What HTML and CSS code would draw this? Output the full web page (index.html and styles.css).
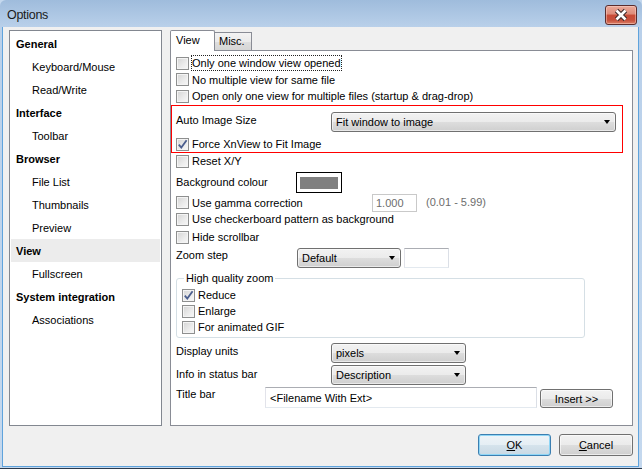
FILE: index.html
```html
<!DOCTYPE html>
<html>
<head>
<meta charset="utf-8">
<title>Options</title>
<link rel="stylesheet" href="styles.css">
</head>
<body>
<div class="window">
  <div class="titlebar">
    <span class="title">Options</span>
    <div class="close">
      <svg width="30" height="18" viewBox="0 0 30 18">
        <path d="M10.5 4.5 L19.5 13.5 M19.5 4.5 L10.5 13.5" stroke="#3d2a2a" stroke-width="4.6" fill="none"/>
        <path d="M10.5 4.5 L19.5 13.5 M19.5 4.5 L10.5 13.5" stroke="#ffffff" stroke-width="2.6" fill="none"/>
      </svg>
    </div>
  </div>
  <div class="client">
    <div class="main">
      <div class="nav">
        <div class="nav-item group">General</div>
        <div class="nav-item sub">Keyboard/Mouse</div>
        <div class="nav-item sub">Read/Write</div>
        <div class="nav-item group">Interface</div>
        <div class="nav-item sub">Toolbar</div>
        <div class="nav-item group">Browser</div>
        <div class="nav-item sub">File List</div>
        <div class="nav-item sub">Thumbnails</div>
        <div class="nav-item sub">Preview</div>
        <div class="nav-item group selected">View</div>
        <div class="nav-item sub">Fullscreen</div>
        <div class="nav-item group">System integration</div>
        <div class="nav-item sub">Associations</div>
      </div>
      <div class="tabs">
        <div class="tabstrip">
          <div class="tab active">View</div>
          <div class="tab">Misc.</div>
        </div>
        <div class="panel">
          <div class="row r1"><span class="cb"></span><span class="focus">Only one window view opened</span></div>
          <div class="row r2"><span class="cb"></span><span>No multiple view for same file</span></div>
          <div class="row r3"><span class="cb"></span><span>Open only one view for multiple files (startup &amp; drag-drop)</span></div>
          <div class="redbox">
            <div class="row-in sel-row">
              <span class="label w155">Auto Image Size</span>
              <div class="select wide"><span>Fit window to image</span><span class="arrow"></span></div>
            </div>
            <div class="row-in force-row">
              <span class="cb checked"><svg width="11" height="11" viewBox="0 0 11 11"><path d="M1.8 5.6 L4.3 8.6 L9.6 1.2" fill="none" stroke="#4b5e8e" stroke-width="1.8"/></svg></span><span>Force XnView to Fit Image</span>
            </div>
          </div>
          <div class="row h16"><span class="cb"></span><span>Reset X/Y</span></div>
          <div class="row bg-row">
            <span class="label w120">Background colour</span>
            <div class="swatch"><div class="swatch-fill"></div></div>
          </div>
          <div class="row gamma-row">
            <div class="cbgroup"><span class="cb"></span><span>Use gamma correction</span></div>
            <div class="textbox disabled small">1.000</div>
            <span class="range">(0.01 - 5.99)</span>
          </div>
          <div class="row h16"><span class="cb"></span><span>Use checkerboard pattern as background</span></div>
          <div class="row hide-row"><span class="cb"></span><span>Hide scrollbar</span></div>
          <div class="row zoom-row">
            <span class="label w121 top">Zoom step</span>
            <div class="select zoomsel"><span>Default</span><span class="arrow"></span></div>
            <div class="textbox small zoombox"></div>
          </div>
          <fieldset class="group-box">
            <legend>High quality zoom</legend>
            <div class="grow"><span class="cb checked"><svg width="11" height="11" viewBox="0 0 11 11"><path d="M1.8 5.6 L4.3 8.6 L9.6 1.2" fill="none" stroke="#4b5e8e" stroke-width="1.8"/></svg></span><span>Reduce</span></div>
            <div class="grow"><span class="cb"></span><span>Enlarge</span></div>
            <div class="grow"><span class="cb"></span><span>For animated GIF</span></div>
          </fieldset>
          <div class="row units-row">
            <span class="label w155 top">Display units</span>
            <div class="select mid"><span>pixels</span><span class="arrow"></span></div>
          </div>
          <div class="row info-row">
            <span class="label w155 top">Info in status bar</span>
            <div class="select mid"><span>Description</span><span class="arrow"></span></div>
          </div>
          <div class="row title-row">
            <span class="label w89 top">Title bar</span>
            <div class="textbox titlebox">&lt;Filename With Ext&gt;</div>
            <button class="btn insert">Insert &gt;&gt;</button>
          </div>
        </div>
      </div>
    </div>
    <div class="footer">
      <button class="btn ok default"><u>O</u>K</button>
      <button class="btn cancel"><u>C</u>ancel</button>
    </div>
  </div>
</div>
</body>
</html>
```

FILE: styles.css
```css
* { box-sizing: border-box; }
html, body { margin: 0; padding: 0; }
body {
  width: 642px;
  height: 469px;
  overflow: hidden;
  font-family: "Liberation Sans", Arial, sans-serif;
  font-size: 11px;
  color: #000;
  background: #c4d8ee;
}
.window {
  width: 642px;
  height: 469px;
  display: flex;
  flex-direction: column;
  background: linear-gradient(#9fbcdc, #b9d0ea 27px, #c4d8ee);
  border-bottom: 1px solid #2b3a4c;
  border-radius: 6px 6px 0 0;
}
.titlebar {
  height: 27px;
  flex: none;
  display: flex;
  align-items: flex-start;
  padding-left: 7px;
}
.title {
  margin-top: 8px;
  line-height: 14px;
  font-size: 12.5px;
  letter-spacing: -0.3px;
  color: #1a1a1a;
}
.close {
  margin-left: auto;
  margin-right: 5px;
  margin-top: 5px;
  width: 32px;
  height: 20px;
  border: 1px solid #5b2d2d;
  border-radius: 3px;
  background: linear-gradient(#eaa999 0%, #de8c7a 45%, #c94b36 50%, #c6503c 78%, #dc8066 100%);
  box-shadow: inset 0 0 0 1px rgba(255, 220, 210, 0.45);
  display: flex;
  align-items: center;
  justify-content: center;
}
.close svg { display: block; }
.client {
  flex: 1;
  margin: 0 3px 1px 2px;
  border: 1px solid #5fa3dc;
  border-top: 0;
  background: #f0f0f0;
  padding: 3px 5px 0 6px;
  display: flex;
  flex-direction: column;
}
.main {
  display: flex;
  gap: 8px;
  height: 396px;
}
.nav {
  width: 153px;
  height: 396px;
  border: 1px solid #828790;
  background: #fff;
  padding: 1px 1px 1px;
}
.nav-item {
  height: 23px;
  display: flex;
  align-items: center;
  white-space: nowrap;
}
.nav-item.group { padding-left: 5px; font-weight: bold; }
.nav-item.sub { padding-left: 21px; }
.nav-item.selected { background: #ececec; }

.tabs {
  width: 463px;
  height: 396px;
  display: flex;
  flex-direction: column;
}
.tabstrip {
  height: 20px;
  flex: none;
  display: flex;
  align-items: flex-end;
}
.tab {
  height: 18px;
  width: 38px;
  margin-left: -1px;
  border: 1px solid #898c95;
  border-bottom: 0;
  padding-left: 4px;
  line-height: 17px;
  background: linear-gradient(#f3f3f3 0%, #ebebeb 50%, #dedede 51%, #d6d6d6 100%);
}
.tab.active {
  position: relative;
  z-index: 1;
  margin-left: 0;
  width: 45px;
  height: 21px;
  margin-bottom: -1px;
  padding-left: 5px;
  line-height: 19px;
  background: #fff;
  border-radius: 2px 2px 0 0;
}
.tab.active + .tab { margin-left: -1px; }

.panel {
  flex: 1;
  border: 1px solid #898c95;
  background: #fff;
  display: flex;
  flex-direction: column;
}
.row {
  display: flex;
  align-items: center;
  margin-left: 5px;
  height: 16px;
  white-space: nowrap;
}
.row-in {
  display: flex;
  align-items: center;
  white-space: nowrap;
}
.r1 { margin-top: 4px; height: 16px; }
.r2 { height: 17px; }
.r3 { height: 16px; }
.h16 { height: 16px; }

.cb {
  width: 13px;
  height: 13px;
  flex: none;
  margin-right: 3px;
  border: 1px solid #8e8f8f;
  background: linear-gradient(135deg, #d4d4d4 0%, #ececec 60%, #f8f8f8 100%);
  box-shadow: inset 0 0 0 1px #f4f4f4;
  display: flex;
  align-items: center;
  justify-content: center;
}
.cb svg { display: block; overflow: visible; }
.focus {
  outline: 1px dotted #222;
  line-height: 14px;
}

.redbox {
  margin-top: 1px;
  width: 452px;
  border: 1px solid #ff0000;
  padding: 6px 0 0 4px;
}
.sel-row { height: 20px; align-items: flex-start; }
.sel-row .label { line-height: 14px; padding-top: 1px; }
.force-row { height: 16px; margin-top: 4px; }

.label { flex: none; }
.label.top { align-self: flex-start; line-height: 14px; }
.w155 { width: 155px; }
.w120 { width: 120px; }
.w121 { width: 121px; }
.w89 { width: 89px; }

.select {
  height: 20px;
  border: 1px solid #707070;
  border-radius: 3px;
  background: linear-gradient(#f2f2f2 0%, #ebebeb 50%, #dddddd 51%, #cfcfcf 100%);
  box-shadow: inset 0 0 0 1px rgba(255, 255, 255, 0.55);
  display: flex;
  align-items: center;
  padding-left: 4px;
  flex: none;
}
.select .arrow {
  margin-left: auto;
  margin-right: 5px;
  width: 0;
  height: 0;
  border-left: 3.5px solid transparent;
  border-right: 3.5px solid transparent;
  border-top: 4px solid #000;
}
.select.wide { width: 285px; }
.select.mid { width: 135px; }
.select.zoomsel { width: 104px; }

.bg-row { margin-top: 3px; height: 20px; }
.swatch {
  width: 46px;
  height: 21px;
  border: 1px solid #000;
  background: #fff;
  padding: 4px 3px 3px;
}
.swatch-fill { width: 100%; height: 100%; background: #808080; }

.gamma-row { margin-top: 2px; height: 17px; align-items: flex-start; }
.cbgroup { width: 196px; display: flex; align-items: center; height: 17px; }
.textbox {
  height: 20px;
  border: 1px solid;
  border-color: #abadb3 #dbdfe6 #e3e9ef #e2e3ea;
  background: #fff;
  display: flex;
  align-items: center;
  padding-left: 4px;
  flex: none;
}
.textbox.small { width: 45px; }
.textbox.disabled {
  height: 18px;
  border-color: #c9c9c9;
  color: #6d6d6d;
  padding-left: 3px;
}
.range { margin-left: 9px; color: #6d6d6d; line-height: 17px; }

.hide-row { margin-top: 1px; height: 18px; }
.zoom-row { margin-top: 2px; height: 20px; align-items: flex-start; }
.zoom-row .label { padding-top: 0; }
.zoombox { margin-left: 3px; }

.group-box {
  margin: 4px 0 0 5px;
  width: 409px;
  border: 1px solid #d5dfe5;
  border-radius: 3px;
  padding: 2px 0 2px 5px;
  min-width: 0;
}
.group-box legend {
  padding: 0 2px;
  margin-left: 2px;
  line-height: 13px;
}
.grow {
  height: 16px;
  display: flex;
  align-items: center;
  white-space: nowrap;
}

.units-row { margin-top: 5px; height: 20px; align-items: flex-start; }
.units-row .label { padding-top: 1px; }
.info-row { margin-top: 2px; height: 20px; align-items: flex-start; }
.info-row .label { padding-top: 2px; }
.title-row { margin-top: 2px; height: 21px; align-items: flex-start; }
.titlebox { width: 272px; height: 21px; }

.btn {
  font-family: inherit;
  font-size: 11px;
  color: #000;
  padding: 0;
  border: 1px solid #707070;
  border-radius: 3px;
  background: linear-gradient(#f2f2f2 0%, #ebebeb 50%, #dddddd 51%, #cfcfcf 100%);
  box-shadow: inset 0 0 0 1px rgba(255, 255, 255, 0.6);
}
.btn.insert { margin-left: 3px; margin-top: 2px; width: 73px; height: 19px; }
.footer {
  margin-top: 8px;
  display: flex;
  justify-content: flex-end;
  gap: 8px;
}
.btn.ok { width: 73px; height: 22px; }
.btn.cancel { width: 74px; height: 22px; }
.btn.default {
  border-color: #3c7fb1;
  box-shadow: inset 0 0 0 1px #8fd6f6;
  background: linear-gradient(#eef4f8 0%, #e5eef4 50%, #d5e3ec 51%, #c9d9e4 100%);
}
```
